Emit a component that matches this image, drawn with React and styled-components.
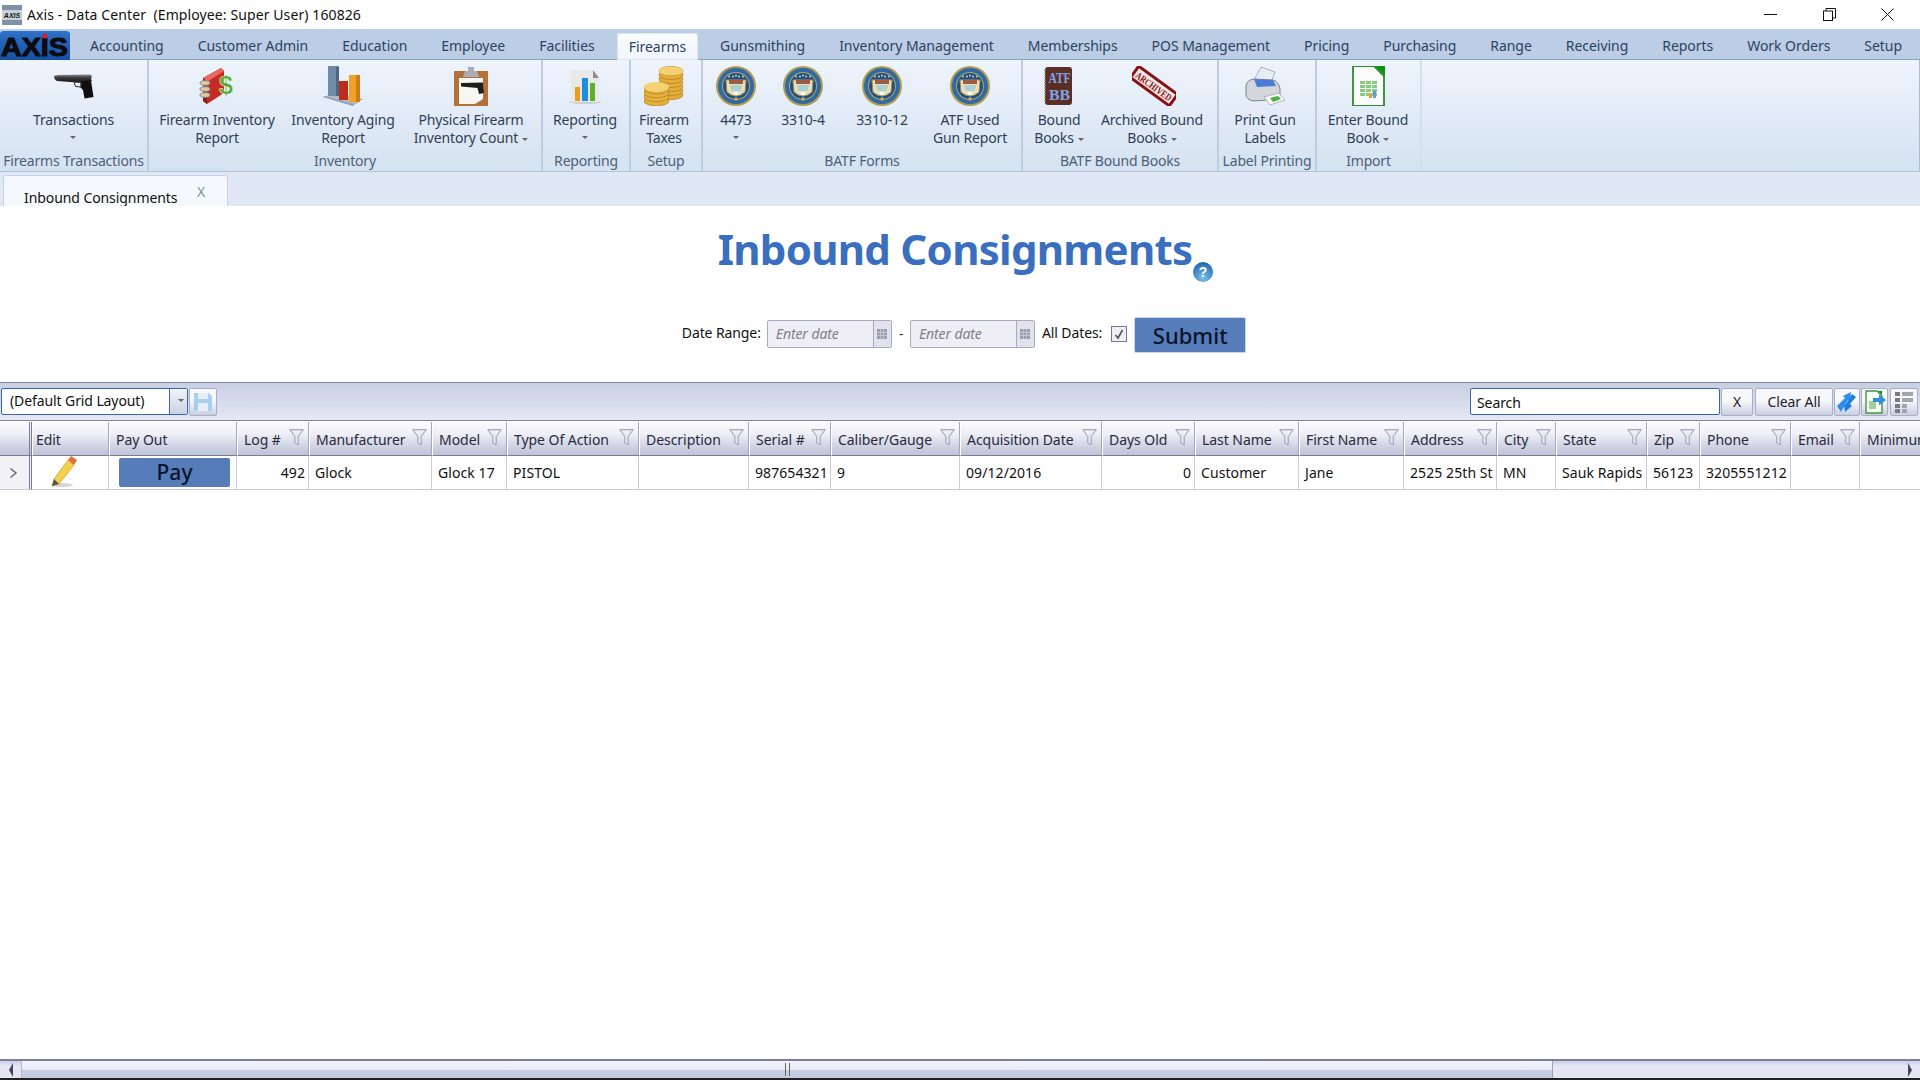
import React from "react";
import styled, { createGlobalStyle } from "styled-components";

const GlobalStyle = createGlobalStyle`
  html, body {
    margin: 0;
    padding: 0;
    height: 100%;
    overflow: hidden;
    background: #fff;
  }
  #root {
    height: 100%;
  }
  * {
    box-sizing: border-box;
  }
`;

const FONT = `"Noto Sans", "Open Sans", sans-serif`;

const Page = styled.div`
  display: flex;
  flex-direction: column;
  height: 1080px;
  width: 1920px;
  overflow: hidden;
  font-family: ${FONT};
  font-size: 14px;
  color: #111;
`;

/* window title bar */
const TitleBar = styled.div`
  display: flex;
  align-items: center;
  flex: 0 0 29px;
  padding-left: 2px;
`;

const TitleText = styled.span`
  margin-left: 5px;
  font-size: 14px;
  letter-spacing: 0.1px;
  white-space: pre;
  color: #111;
`;

const WindowControls = styled.div`
  display: flex;
  margin-left: auto;
  padding-right: 3px;
`;

const WindowButton = styled.div`
  display: flex;
  align-items: center;
  justify-content: center;
  width: 58.5px;
  height: 29px;
`;

/* top level tabs */
const TabStrip = styled.div`
  display: flex;
  align-items: flex-end;
  flex: 0 0 31px;
  background: #bccee5;
  border-bottom: 1px solid #8ca4c4;
`;

const LogoBox = styled.div`
  flex: 0 0 70px;
  height: 30px;
  margin-right: 3px;
  margin-bottom: -1px;
`;

const Tab = styled.div`
  display: flex;
  align-items: center;
  height: 27px;
  padding: 0 ${(p) => (p.$active ? "12px" : "17px")} 1px;
  margin: 0 ${(p) => (p.$active ? "5px" : "0")} ${(p) => (p.$active ? "-1px" : "0")};
  white-space: nowrap;
  letter-spacing: -0.04px;
  color: #2c4260;
  background: ${(p) => (p.$active ? "linear-gradient(#fbfdff, #eef5fc)" : "none")};
  border-radius: ${(p) => (p.$active ? "3px 3px 0 0" : "0")};
  box-shadow: ${(p) => (p.$active ? "inset 0 0 0 1px #dbe6f3" : "none")};
`;

/* ribbon */
const Ribbon = styled.div`
  display: flex;
  flex: 0 0 112px;
  background: linear-gradient(#eef4fc, #d5e2f1);
  border-right: 1px solid #a9bdd6;
  border-bottom: 1px solid #b4c4d8;
`;

const RibbonGroup = styled.div`
  display: flex;
  flex-direction: column;
  flex: 0 0 ${(p) => p.$width}px;
  border-right: 2px solid ${(p) => (p.$last ? "#d2dfee" : "#bccde0")};
`;

const GroupButtons = styled.div`
  display: flex;
  flex: 1;
  padding-left: ${(p) => p.$pad || 0}px;
`;

const GroupLabel = styled.div`
  flex: 0 0 19px;
  text-align: center;
  white-space: nowrap;
  line-height: 18px;
  letter-spacing: -0.18px;
  color: #4d6078;
`;

const RibbonButton = styled.div`
  display: flex;
  flex-direction: column;
  align-items: center;
  flex: 0 0 ${(p) => p.$width}px;
  padding-top: 6px;
`;

const IconSlot = styled.div`
  flex: 0 0 40px;
  width: 40px;
  height: 40px;
  margin-bottom: 5px;
`;

const ButtonLabel = styled.div`
  text-align: center;
  white-space: nowrap;
  line-height: 18px;
  letter-spacing: -0.15px;
  color: #2f3f55;
`;

const Caret = styled.span`
  display: ${(p) => (p.$block ? "block" : "inline-block")};
  width: 0;
  height: 0;
  margin: ${(p) => (p.$block ? "7px auto 0" : "0 0 2px 4px")};
  border-left: 3px solid transparent;
  border-right: 3px solid transparent;
  border-top: 3px solid #666;
`;

/* document tabs */
const DocStrip = styled.div`
  display: flex;
  align-items: flex-end;
  flex: 0 0 34px;
  padding-left: 3px;
  background: #dfe8f4;
`;

const DocTab = styled.div`
  display: flex;
  align-items: flex-end;
  width: 225px;
  height: 31px;
  padding-left: 20px;
  background: #f5f9fd;
  border: 1px solid #c6d3e3;
  border-bottom: none;
  border-radius: 3px 3px 0 0;
`;

const DocTabLabel = styled.span`
  line-height: 20px;
  margin-bottom: -2px;
  letter-spacing: -0.08px;
  white-space: nowrap;
`;

const DocTabClose = styled.span`
  display: flex;
  align-items: center;
  justify-content: center;
  width: 22px;
  height: 26px;
  margin-left: auto;
  margin-right: 15px;
  padding-bottom: 4px;
  font-size: 14px;
  color: #7f93aa;
`;

/* page content */
const Content = styled.div`
  display: flex;
  flex-direction: column;
  flex: 1;
  min-height: 0;
  background: #fff;
`;

const HeadingRow = styled.div`
  display: flex;
  justify-content: center;
  align-items: flex-start;
  height: 111px;
  padding: 13px 0 0 11px;
`;

const Heading = styled.h1`
  margin: 0;
  font-size: 42px;
  line-height: 60px;
  font-weight: 700;
  letter-spacing: -0.72px;
  white-space: nowrap;
  color: #3a6fc0;
`;

const HelpBadge = styled.div`
  flex: 0 0 20px;
  height: 20px;
  margin-top: 43px;
  margin-left: 1px;
`;

const DateRow = styled.div`
  display: flex;
  justify-content: center;
  align-items: center;
  height: 36px;
  padding-left: 8px;
`;

const DateLabel = styled.span`
  margin-top: -6px;
  letter-spacing: -0.1px;
  white-space: nowrap;
  color: #111;
`;

const DateInput = styled.div`
  display: flex;
  align-items: stretch;
  width: 125px;
  height: 28px;
  margin: -3px ${(p) => p.$right || 0}px 0 ${(p) => p.$left || 0}px;
  background: #eeeef4;
  border: 1px solid #a9a9c0;
  border-radius: 2px;
`;

const DatePlaceholder = styled.span`
  flex: 1;
  padding-left: 8px;
  line-height: 26px;
  font-style: italic;
  letter-spacing: -0.1px;
  color: #808088;
`;

const CalendarButton = styled.span`
  display: flex;
  align-items: center;
  justify-content: center;
  flex: 0 0 18px;
  background: #e2e2ec;
  border-left: 1px solid #a9a9c0;
`;

const Dash = styled.span`
  margin: -3px -1px 0 0;
  color: #333;
`;

const CheckBox = styled.span`
  display: flex;
  align-items: center;
  justify-content: center;
  width: 16px;
  height: 16px;
  margin: -3px 7px 0 9px;
  background: #eeeef4;
  border: 1px solid #77778f;
`;

const SubmitButton = styled.button`
  width: 112px;
  height: 36px;
  padding: 0;
  border: 1px solid #c9d5e8;
  border-radius: 2px;
  font-family: ${FONT};
  font-size: 22px;
  font-weight: 500;
  color: #08142a;
  background: #567cb9;
`;

/* grid toolbar */
const Toolbar = styled.div`
  display: flex;
  align-items: center;
  height: 39px;
  margin-top: 29px;
  padding: 0 2px 0 1px;
  background: linear-gradient(#c7cfe3, #e5e8f4);
  border-top: 1px solid #85859b;
  border-bottom: 1px solid #85859b;
`;

const LayoutCombo = styled.div`
  display: flex;
  width: 187px;
  height: 27px;
  background: #fff;
  border: 1px solid #3a66ad;
  border-radius: 2px;
`;

const LayoutValue = styled.span`
  flex: 1;
  padding-left: 8px;
  line-height: 24px;
  letter-spacing: -0.1px;
  color: #111;
`;

const ComboDrop = styled.span`
  display: flex;
  align-items: center;
  justify-content: center;
  flex: 0 0 18px;
  background: linear-gradient(#f2f3f9, #ccd2e3);
  border-left: 1px solid #3a66ad;
`;

const ToolButton = styled.div`
  display: flex;
  align-items: center;
  justify-content: center;
  width: ${(p) => p.$width}px;
  height: 28px;
  margin-left: ${(p) => p.$left || 0}px;
  letter-spacing: -0.1px;
  color: #1c1c28;
  background: linear-gradient(#f7f8fc 45%, #c9cfe1);
  border: 1px solid #a9aec4;
  border-radius: 2px;
`;

const SearchInput = styled.div`
  width: 250px;
  height: 27px;
  margin-left: auto;
  padding-left: 6px;
  line-height: 27px;
  letter-spacing: -0.1px;
  background: #fff;
  border: 1px solid #3a66ad;
  border-radius: 2px;
  color: #111;
`;

/* data grid */
const GridRow = styled.div`
  display: grid;
  grid-template-columns: ${(p) => p.$columns};
  width: 2000px;
`;

const HeaderCell = styled.div`
  display: flex;
  align-items: center;
  justify-content: space-between;
  height: 34px;
  margin-top: 1px;
  padding: 1px 4px 0 ${(p) => p.$pad || 6}px;
  letter-spacing: -0.05px;
  white-space: nowrap;
  overflow: hidden;
  color: #2a2a3c;
  background: linear-gradient(#fbfbfe, #eff0f7 35%, #c6cbde 85%, #c0c5d9);
  border-right: 1px solid #a6a6bd;
  border-left: 1px solid #fff;
  border-bottom: 1px solid #7b7b92;
`;

const HeaderCorner = styled(HeaderCell)`
  padding: 0;
  border-left: none;
  border-right: 3px double #7b7b92;
`;

const FunnelSlot = styled.span`
  display: flex;
  margin-top: -3px;
`;

const DataCell = styled.div`
  display: flex;
  align-items: center;
  justify-content: ${(p) => (p.$right ? "flex-end" : "flex-start")};
  height: 34px;
  padding: 0 3px 0 6px;
  letter-spacing: 0.08px;
  white-space: nowrap;
  overflow: hidden;
  color: #111;
  border-right: 1px solid #cacadc;
  border-bottom: 1px solid #cacadc;
`;

const RowIndicator = styled(DataCell)`
  justify-content: center;
  padding: 0 3px 0 0;
  background: #f2f2f6;
  border-right: 3px double #7b7b92;
  color: #666;
`;

const EditCell = styled(DataCell)`
  justify-content: center;
  padding: 0 12px 0 0;
  overflow: visible;
`;

const PayCell = styled(DataCell)`
  justify-content: center;
  padding: 3px 0 0 4px;
`;

const PayButton = styled.div`
  width: 111px;
  height: 29px;
  margin-bottom: 3px;
  text-align: center;
  line-height: 29px;
  font-size: 21px;
  font-weight: 500;
  color: #08142a;
  background: #567cb9;
  border-radius: 2px;
`;

const GridSpace = styled.div`
  flex: 1;
`;

/* bottom scroll bar */
const ScrollBar = styled.div`
  display: flex;
  flex: 0 0 19px;
  background: linear-gradient(#c9cee2, #e4e7f3 30%);
  border-top: 2px solid #7c7ca0;
`;

const ScrollArrow = styled.div`
  display: flex;
  align-items: center;
  justify-content: ${(p) => (p.$right ? "flex-end" : "center")};
  flex: ${(p) => (p.$right ? "1" : "0 0 21px")};
  padding-right: ${(p) => (p.$right ? "7px" : "0")};
`;

const ScrollThumb = styled.div`
  display: flex;
  align-items: center;
  justify-content: center;
  flex: 0 0 1532px;
  background: linear-gradient(#f4f5fb, #e9ebf5 50%, #c9cfe2 55%, #c6cce0);
  border-left: 1px solid #b4b8cc;
  border-right: 1px solid #9fa3bb;
`;

const ScrollGrip = styled.div`
  width: 5px;
  height: 13px;
  border-left: 1px solid #666;
  border-right: 1px solid #666;
`;

const BottomEdge = styled.div`
  flex: 0 0 2px;
  background: #222;
`;

/* drawings */
const GunIcon = () => (
  <svg width="40" height="40" viewBox="0 0 40 40">
    <defs>
      <linearGradient id="gunFill" x1="0" y1="0" x2="0" y2="1">
        <stop offset="0" stopColor="#8a8c90" />
        <stop offset="0.4" stopColor="#38383a" />
        <stop offset="1" stopColor="#141414" />
      </linearGradient>
    </defs>
    <path d="M0 10 L1 9.5 L3 9.5 L3 9 L36 8.5 L38 10 L37 13 L38 15 L30 17 L3 15 L0.5 13 Z" fill="url(#gunFill)" />
    <path d="M27 15 L37 14.5 L39.5 31 L30.5 32.5 L29 24 L26.5 21.5 Z" fill="#0f0f0f" />
    <path d="M20 16 L27 16 L27 21 L21.5 20.5 Z" fill="none" stroke="#2c2c2c" strokeWidth="1" />
  </svg>
);

const BinderIcon = () => (
  <svg width="40" height="40" viewBox="0 0 40 40">
    <path d="M6 12 L24 2 L27 5 L27 27 L10 38 L6 35 Z" fill="#c52a24" />
    <path d="M24 2 L27 5 L10 16 L6 12 Z" fill="#e8675e" />
    <path d="M6 12 L10 16 L10 38 L6 35 Z" fill="#8f1914" />
    {[17, 23, 29].map((y) => (
      <ellipse key={y} cx="8" cy={y} rx="5" ry="2.3" fill="#e9c89a" stroke="#7a8ca0" strokeWidth="1" />
    ))}
    <text x="29" y="28" textAnchor="middle" fontFamily="Liberation Sans" fontWeight="700" fontSize="25" fill="#4ea62c" stroke="#dff0d0" strokeWidth="0.6">
      $
    </text>
  </svg>
);

const ChartIcon = () => (
  <svg width="40" height="40" viewBox="0 0 40 40">
    <path d="M0 31 L14 26 L40 33 L30 40 Z" fill="#aebcc8" />
    <path d="M0 31 L30 40 L30 38 L2 30 Z" fill="#93a2ae" />
    <rect x="5" y="0" width="11" height="30" fill="#6f8ca6" />
    <rect x="13" y="1" width="3" height="29" fill="#4d677d" />
    <rect x="16" y="15" width="9" height="19" fill="#bb2c1c" />
    <rect x="26" y="9" width="11" height="27" fill="#f0a126" />
    <rect x="33" y="9" width="4" height="27" fill="#cf7d12" />
  </svg>
);

const ClipboardIcon = () => (
  <svg width="40" height="40" viewBox="0 0 40 40">
    <rect x="3" y="5" width="34" height="35" fill="#b5703a" />
    <path d="M8 12 L32 12 L32 33 L24 38 L8 38 Z" fill="#f6f6f2" />
    <path d="M14 5 L17 5 L17 1 L23 1 L23 5 L26 5 L28 11 L12 11 Z" fill="#a9adb3" />
    <path d="M10 17 L32 16.5 L32 20 L33 27 L28 28 L26.5 22 L10 20.5 Z" fill="#1f1f1f" />
  </svg>
);

const ReportIcon = () => (
  <svg width="40" height="40" viewBox="0 0 40 40">
    <ellipse cx="20" cy="36" rx="16" ry="2" fill="#c9ced4" />
    <path d="M6 4 L28 4 L34 10 L34 36 L6 36 Z" fill="#e9e9e9" />
    <path d="M28 4 L34 12 L28 12 Z" fill="#8d8d8d" />
    <rect x="10" y="21" width="5" height="14" fill="#f09a1a" />
    <rect x="17" y="12" width="6" height="23" fill="#1f8ce0" />
    <rect x="25" y="17" width="5" height="18" fill="#5eb02a" />
  </svg>
);

const COINS_BACK = [29, 25, 21, 17, 13, 9, 5];
const COINS_FRONT = [35, 31, 27, 23];

const CoinsIcon = () => (
  <svg width="40" height="40" viewBox="0 0 40 40">
    {COINS_BACK.map((y) => (
      <ellipse key={y} cx="27" cy={y} rx="12" ry="4.5" fill="#e2ad3c" stroke="#bb8420" strokeWidth="0.8" />
    ))}
    <ellipse cx="27" cy="5" rx="12" ry="4.5" fill="#f4d274" />
    {COINS_FRONT.map((y) => (
      <ellipse key={y} cx="12.5" cy={y} rx="12.5" ry="4.8" fill="#e4b03e" stroke="#bb8420" strokeWidth="0.8" />
    ))}
    <ellipse cx="12.5" cy="21" rx="12.5" ry="5" fill="#f4d274" />
  </svg>
);

const SealIcon = () => (
  <svg width="40" height="40" viewBox="0 0 40 40">
    <circle cx="20" cy="20" r="20" fill="#b09a4c" />
    <circle cx="20" cy="20" r="18" fill="#2f69a6" />
    <circle cx="20" cy="20" r="14" fill="#b9a45e" />
    <circle cx="20" cy="20" r="13" fill="#1f5188" />
    {[13, 17, 20, 23, 27].map((x) => (
      <circle key={x} cx={x} cy={x === 20 ? 9.5 : 10.5} r="0.9" fill="#e8dca8" />
    ))}
    <path d="M10 14 L30 14 L29 26 Q20 34 11 26 Z" fill="#e9dfbd" stroke="#a98f46" strokeWidth="1" />
    <path d="M13 14 L27 14 L27 18 L13 18 Z" fill="#a05a3e" />
    <path d="M14 19 L26 19 L24.5 25 L15.5 25 Z" fill="#a9d0d2" />
    <path d="M18 26 H22 V29 H18 Z" fill="#fff" />
    <circle cx="20" cy="33" r="1.8" fill="#c6ae5e" />
  </svg>
);

const BookIcon = () => (
  <svg width="40" height="40" viewBox="0 0 40 40">
    <rect x="6" y="1" width="27" height="38" rx="3" fill="#5a3026" />
    <path d="M6 4 V36" stroke="#a48b80" strokeWidth="2" strokeDasharray="1 1.5" />
    <text x="20.5" y="17" textAnchor="middle" fontFamily="Liberation Serif" fontWeight="700" fontSize="14" textLength="22" lengthAdjust="spacingAndGlyphs" fill="#7ea4e6">
      ATF
    </text>
    <text x="20.5" y="34" textAnchor="middle" fontFamily="Liberation Serif" fontWeight="700" fontSize="15" textLength="21" lengthAdjust="spacingAndGlyphs" fill="#7ea4e6">
      BB
    </text>
  </svg>
);

const ArchivedIcon = () => (
  <svg width="44" height="40" viewBox="0 0 44 40">
    <g transform="rotate(36 22 20)">
      <rect x="-2" y="13" width="48" height="14" fill="#f4e8e4" stroke="#8a0f14" strokeWidth="3" />
      <text x="22" y="24" textAnchor="middle" fontFamily="Liberation Serif" fontWeight="700" fontSize="10" textLength="42" lengthAdjust="spacingAndGlyphs" fill="#8a0f14">
        ARCHIVED
      </text>
    </g>
  </svg>
);

const PrinterIcon = () => (
  <svg width="40" height="40" viewBox="0 0 40 40">
    <path d="M9 14 L16 1 L30 6 L26 18 Z" fill="#e6edf4" stroke="#93a6ba" strokeWidth="0.8" />
    <path d="M1 20 Q2 14 9 13 L28 14 Q34 16 35 23 L35 33 L9 35 Q1 34 1 28 Z" fill="#d3d6db" stroke="#7f838a" strokeWidth="1" />
    <path d="M9 13 L28 14 L31 20 L12 21 Z" fill="#4a7cd6" />
    <path d="M19 31 L34 27 L40 34 L25 39 Z" fill="#f7f7f4" stroke="#909090" strokeWidth="0.6" />
    <path d="M25 32 L33 30 L36 33 L28 36 Z" fill="#4fae4a" />
  </svg>
);

const SheetIcon = ({ size = 40 }) => (
  <svg width={size} height={size} viewBox="0 0 40 40">
    <path d="M5 0 L26 0 L36 10 L36 40 L5 40 Z" fill="#fbfcfb" stroke="#2c8c2c" strokeWidth="1.8" />
    <path d="M27 0 L37 0 L37 10 Z" fill="#109010" />
    {[0, 1, 2, 3].map((r) =>
      [0, 1, 2].map((c) => (
        <rect key={`${r}-${c}`} x={12 + c * 6} y={15 + r * 4} width="5" height="3" fill="#86cc7c" />
      ))
    )}
    <rect x="21" y="27" width="3" height="5" fill="#e8a23c" />
    <rect x="25" y="25" width="3" height="7" fill="#5f9be0" />
  </svg>
);

const FunnelIcon = () => (
  <svg width="15" height="17" viewBox="0 0 15 17">
    <path d="M0.7 0.7 H14.3 L9.2 7.5 V15.8 L5.8 14 V7.5 Z" fill="#e6e7ef" stroke="#9a9aae" strokeWidth="1" />
    <path d="M5 3 H10" stroke="#fff" strokeWidth="1" />
  </svg>
);

const PencilIcon = () => (
  <svg width="30" height="36" viewBox="0 0 30 36">
    <ellipse cx="13" cy="30" rx="11" ry="2" fill="#d6d6d6" />
    <path d="M5 24 L19 5 L25 10 L10 29 L3 31 Z" fill="#f3d04f" stroke="#d4a72a" strokeWidth="0.8" />
    <path d="M19 5 L22 1 L28 5 L25 10 Z" fill="#e0703a" />
    <path d="M5 24 L10 29 L3 31 Z" fill="#555" />
  </svg>
);

const SaveIcon = () => (
  <svg width="18" height="18" viewBox="0 0 18 18">
    <path d="M0 0 H15 L18 3 V18 H0 Z" fill="#a8d0ee" />
    <rect x="4" y="0" width="10" height="6" fill="#e6eff7" />
    <rect x="4" y="10" width="10" height="8" fill="#e6eff7" />
  </svg>
);

const CalendarIcon = () => (
  <svg width="10" height="10" viewBox="0 0 10 10">
    {[0, 3.5, 7].map((y) =>
      [0, 3.5, 7].map((x) => <rect key={`${x}-${y}`} x={x} y={y} width="3" height="3" fill="#9d9db0" />)
    )}
  </svg>
);

const ArrowsIcon = () => (
  <svg width="20" height="22" viewBox="0 0 20 22">
    <path d="M0 15 L8 7 L6 5 L14 1 L13 9 L11 9 L4 21 Z" fill="#2e8fec" />
    <path d="M19 6 L13 13 L15 15 L8 21 L7 14 L9 13 L15 3 Z" fill="#1f7fe0" />
  </svg>
);

const ExportIcon = () => (
  <svg width="22" height="24" viewBox="0 0 22 24">
    <path d="M2 1 H13 L18 6 V23 H2 Z" fill="#fbfcfb" stroke="#3b9a3b" strokeWidth="1.4" />
    <path d="M14 1 H18 V5 Z" fill="#109010" />
    <rect x="5" y="11" width="7" height="8" fill="#9ed394" />
    <path d="M9 8 H15 V4.5 L22 10 L15 15.5 V12 H9 Z" fill="#2e8fdc" />
  </svg>
);

const ColumnsIcon = () => (
  <svg width="18" height="22" viewBox="0 0 18 22">
    <rect x="0" y="1" width="5" height="4" fill="#7a7a80" />
    <rect x="7" y="1" width="11" height="4" fill="#a4a4aa" />
    <rect x="0" y="7" width="5" height="4" fill="#7a7a80" />
    <rect x="7" y="7" width="11" height="4" fill="#a4a4aa" />
    <rect x="0" y="13" width="5" height="4" fill="#7a7a80" />
    <rect x="7" y="13" width="5" height="4" fill="#a4a4aa" />
    <rect x="0" y="18" width="5" height="4" fill="#7a7a80" />
    <rect x="7" y="18" width="5" height="4" fill="#a4a4aa" />
  </svg>
);

const HelpIcon = () => (
  <svg width="20" height="20" viewBox="0 0 20 20">
    <defs>
      <radialGradient id="helpFill" cx="0.5" cy="0.8" r="0.8">
        <stop offset="0" stopColor="#7cc0ee" />
        <stop offset="1" stopColor="#1e62ac" />
      </radialGradient>
    </defs>
    <circle cx="10" cy="10" r="10" fill="url(#helpFill)" />
    <text x="10" y="15" textAnchor="middle" fontFamily="Liberation Sans" fontWeight="700" fontSize="14" fill="#fff">
      ?
    </text>
  </svg>
);

const AppIcon = () => (
  <svg width="20" height="20" viewBox="0 0 20 20">
    <rect width="20" height="20" fill="#7f90a8" />
    <rect y="5" width="20" height="10" fill="#c9cfd8" />
    <text x="10" y="13" textAnchor="middle" fontFamily="Liberation Sans" fontWeight="700" fontStyle="italic" fontSize="7" fill="#111">
      AXIS
    </text>
  </svg>
);

const AxisLogo = () => (
  <svg width="70" height="30" viewBox="0 0 70 30">
    <defs>
      <linearGradient id="logoFill" x1="0" y1="0" x2="0" y2="1">
        <stop offset="0" stopColor="#2e72cc" />
        <stop offset="1" stopColor="#164f9f" />
      </linearGradient>
    </defs>
    <path d="M0 4 Q0 1 4 1 H66 Q70 1 70 4 V30 H0 Z" fill="url(#logoFill)" />
    <text x="1" y="26" fontFamily="Liberation Sans" fontWeight="700" fontSize="25" textLength="67" lengthAdjust="spacingAndGlyphs" fill="#0b0b10" stroke="#0b0b10" strokeWidth="1">
      AXIS
    </text>
    <circle cx="45" cy="6" r="2.6" fill="#d5222a" />
  </svg>
);

const TABS = [
  ["Accounting"],
  ["Customer Admin"],
  ["Education"],
  ["Employee"],
  ["Facilities"],
  ["Firearms", true],
  ["Gunsmithing"],
  ["Inventory Management"],
  ["Memberships"],
  ["POS Management"],
  ["Pricing"],
  ["Purchasing"],
  ["Range"],
  ["Receiving"],
  ["Reports"],
  ["Work Orders"],
  ["Setup"],
];

const GROUPS = [
  {
    label: "Firearms Transactions",
    width: 149,
    buttons: [{ icon: <GunIcon />, width: 147, lines: ["Transactions"], caret: "block" }],
  },
  {
    label: "Inventory",
    width: 394,
    pad: 7,
    buttons: [
      { icon: <BinderIcon />, width: 122, lines: ["Firearm Inventory", "Report"] },
      { icon: <ChartIcon />, width: 130, lines: ["Inventory Aging", "Report"] },
      { icon: <ClipboardIcon />, width: 126, lines: ["Physical Firearm", "Inventory Count"], caret: "inline" },
    ],
  },
  {
    label: "Reporting",
    width: 88,
    buttons: [{ icon: <ReportIcon />, width: 84, lines: ["Reporting"], caret: "block" }],
  },
  {
    label: "Setup",
    width: 72,
    buttons: [{ icon: <CoinsIcon />, width: 66, lines: ["Firearm", "Taxes"] }],
  },
  {
    label: "BATF Forms",
    width: 320,
    buttons: [
      { icon: <SealIcon />, width: 66, lines: ["4473"], caret: "block" },
      { icon: <SealIcon />, width: 68, lines: ["3310-4"] },
      { icon: <SealIcon />, width: 90, lines: ["3310-12"] },
      { icon: <SealIcon />, width: 86, lines: ["ATF Used", "Gun Report"] },
    ],
  },
  {
    label: "BATF Bound Books",
    width: 196,
    pad: 1,
    buttons: [
      { icon: <BookIcon />, width: 70, lines: ["Bound", "Books"], caret: "inline" },
      { icon: <ArchivedIcon />, width: 116, lines: ["Archived Bound", "Books"], caret: "inline" },
    ],
  },
  {
    label: "Label Printing",
    width: 98,
    buttons: [{ icon: <PrinterIcon />, width: 92, lines: ["Print Gun", "Labels"] }],
  },
  {
    label: "Import",
    width: 105,
    last: true,
    buttons: [{ icon: <SheetIcon />, width: 102, lines: ["Enter Bound", "Book"], caret: "inline" }],
  },
];

const COLUMNS = [
  { label: "Log #", width: 72, value: "492", right: true },
  { label: "Manufacturer", width: 123, value: "Glock" },
  { label: "Model", width: 75, value: "Glock 17" },
  { label: "Type Of Action", width: 132, value: "PISTOL" },
  { label: "Description", width: 110, value: "" },
  { label: "Serial #", width: 82, value: "987654321" },
  { label: "Caliber/Gauge", width: 129, value: "9" },
  { label: "Acquisition Date", width: 142, value: "09/12/2016" },
  { label: "Days Old", width: 93, value: "0", right: true },
  { label: "Last Name", width: 104, value: "Customer" },
  { label: "First Name", width: 105, value: "Jane" },
  { label: "Address", width: 93, value: "2525 25th St" },
  { label: "City", width: 59, value: "MN" },
  { label: "State", width: 91, value: "Sauk Rapids" },
  { label: "Zip", width: 53, value: "56123" },
  { label: "Phone", width: 91, value: "3205551212" },
  { label: "Email", width: 69, value: "" },
  { label: "Minimum", width: 140, value: "", noFilter: true },
];

const gridColumns = `32px 77px 128px ${COLUMNS.map((c) => `${c.width}px`).join(" ")}`;

const App = () => (
  <Page>
    <GlobalStyle />
    <TitleBar>
      <AppIcon />
      <TitleText>Axis - Data Center  (Employee: Super User) 160826</TitleText>
      <WindowControls>
        <WindowButton>
          <svg width="13" height="1" viewBox="0 0 13 1">
            <rect width="13" height="1" fill="#111" />
          </svg>
        </WindowButton>
        <WindowButton>
          <svg width="13" height="13" viewBox="0 0 13 13" fill="none" stroke="#111">
            <rect x="0.5" y="3" width="9" height="9.5" />
            <path d="M3 3 V0.5 H12.5 V10 H9.5" />
          </svg>
        </WindowButton>
        <WindowButton>
          <svg width="13" height="13" viewBox="0 0 13 13" stroke="#111">
            <path d="M0.5 0.5 L12.5 12.5 M12.5 0.5 L0.5 12.5" />
          </svg>
        </WindowButton>
      </WindowControls>
    </TitleBar>

    <TabStrip>
      <LogoBox>
        <AxisLogo />
      </LogoBox>
      {TABS.map(([label, active]) => (
        <Tab key={label} $active={active}>
          {label}
        </Tab>
      ))}
    </TabStrip>

    <Ribbon>
      {GROUPS.map((group) => (
        <RibbonGroup key={group.label} $width={group.width} $last={group.last}>
          <GroupButtons $pad={group.pad}>
            {group.buttons.map((button) => (
              <RibbonButton key={button.lines.join(" ")} $width={button.width}>
                <IconSlot>{button.icon}</IconSlot>
                <ButtonLabel>
                  {button.lines[0]}
                  {button.lines[1] && <br />}
                  {button.lines[1]}
                  {button.caret && <Caret $block={button.caret === "block"} />}
                </ButtonLabel>
              </RibbonButton>
            ))}
          </GroupButtons>
          <GroupLabel>{group.label}</GroupLabel>
        </RibbonGroup>
      ))}
    </Ribbon>

    <DocStrip>
      <DocTab>
        <DocTabLabel>Inbound Consignments</DocTabLabel>
        <DocTabClose>X</DocTabClose>
      </DocTab>
    </DocStrip>

    <Content>
      <HeadingRow>
        <Heading>Inbound Consignments</Heading>
        <HelpBadge>
          <HelpIcon />
        </HelpBadge>
      </HeadingRow>

      <DateRow>
        <DateLabel>Date Range:</DateLabel>
        <DateInput $left={6}>
          <DatePlaceholder>Enter date</DatePlaceholder>
          <CalendarButton>
            <CalendarIcon />
          </CalendarButton>
        </DateInput>
        <Dash>&nbsp;&nbsp;-&nbsp;&nbsp;</Dash>
        <DateInput $right={7}>
          <DatePlaceholder>Enter date</DatePlaceholder>
          <CalendarButton>
            <CalendarIcon />
          </CalendarButton>
        </DateInput>
        <DateLabel>All Dates:</DateLabel>
        <CheckBox>
          <svg width="12" height="12" viewBox="0 0 12 12" fill="none" stroke="#555" strokeWidth="1.6">
            <path d="M2.5 7 L5 10 L9.5 2" />
          </svg>
        </CheckBox>
        <SubmitButton>Submit</SubmitButton>
      </DateRow>

      <Toolbar>
        <LayoutCombo>
          <LayoutValue>(Default Grid Layout)</LayoutValue>
          <ComboDrop>
            <Caret />
          </ComboDrop>
        </LayoutCombo>
        <ToolButton $width={28} $left={1}>
          <SaveIcon />
        </ToolButton>
        <SearchInput>Search</SearchInput>
        <ToolButton $width={32} $left={1}>
          X
        </ToolButton>
        <ToolButton $width={78} $left={2}>
          Clear All
        </ToolButton>
        <ToolButton $width={26} $left={1}>
          <ArrowsIcon />
        </ToolButton>
        <ToolButton $width={27} $left={1}>
          <ExportIcon />
        </ToolButton>
        <ToolButton $width={28} $left={2}>
          <ColumnsIcon />
        </ToolButton>
      </Toolbar>

      <GridRow $columns={gridColumns}>
        <HeaderCorner />
        <HeaderCell $pad={3}>Edit</HeaderCell>
        <HeaderCell>Pay Out</HeaderCell>
        {COLUMNS.map((column) => (
          <HeaderCell key={column.label}>
            {column.label}
            {!column.noFilter && (
              <FunnelSlot>
                <FunnelIcon />
              </FunnelSlot>
            )}
          </HeaderCell>
        ))}
      </GridRow>
      <GridRow $columns={gridColumns}>
        <RowIndicator>
          <svg width="9" height="12" viewBox="0 0 9 12" fill="none" stroke="#6a6a70" strokeWidth="1.5">
            <path d="M1.5 1.5 L7 6 L1.5 10.5" />
          </svg>
        </RowIndicator>
        <EditCell>
          <PencilIcon />
        </EditCell>
        <PayCell>
          <PayButton>Pay</PayButton>
        </PayCell>
        {COLUMNS.map((column) => (
          <DataCell key={column.label} $right={column.right}>
            {column.value}
          </DataCell>
        ))}
      </GridRow>
      <GridSpace />

      <ScrollBar>
        <ScrollArrow>
          <svg width="6" height="14" viewBox="0 0 6 14">
            <path d="M5 0 L1 7 L5 14 Z" fill="#454560" />
          </svg>
        </ScrollArrow>
        <ScrollThumb>
          <ScrollGrip />
        </ScrollThumb>
        <ScrollArrow $right>
          <svg width="6" height="14" viewBox="0 0 6 14">
            <path d="M1 0 L5 7 L1 14 Z" fill="#454560" />
          </svg>
        </ScrollArrow>
      </ScrollBar>
      <BottomEdge />
    </Content>
  </Page>
);

export default App;
